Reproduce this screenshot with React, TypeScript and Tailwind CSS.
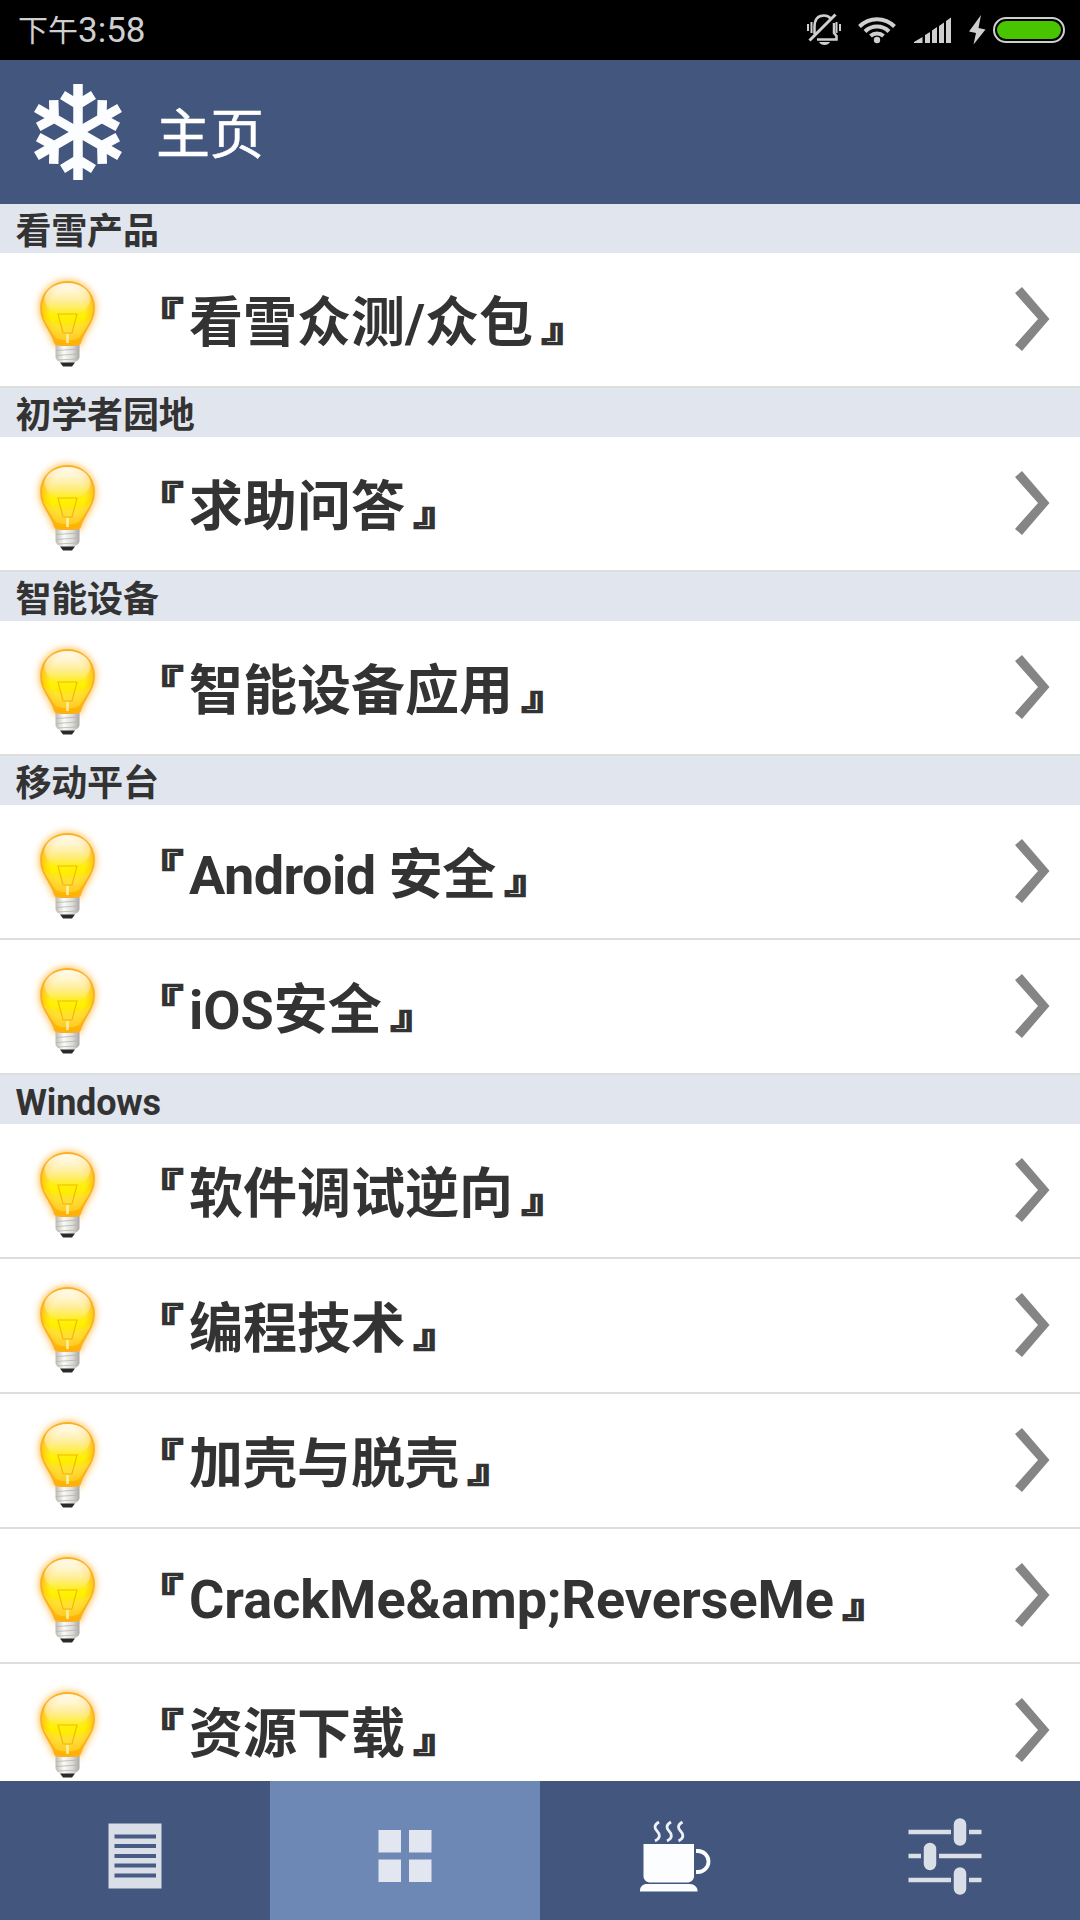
import { useState } from "react";

interface Section {
  title: string;
  items: string[];
}

const sections: Section[] = [
  { title: "看雪产品", items: ["看雪众测/众包"] },
  { title: "初学者园地", items: ["求助问答"] },
  { title: "智能设备", items: ["智能设备应用"] },
  { title: "移动平台", items: ["Android 安全", "iOS安全"] },
  {
    title: "Windows",
    items: ["软件调试逆向", "编程技术", "加壳与脱壳", "CrackMe&amp;ReverseMe", "资源下载"],
  },
];

function StatusIcons() {
  return (
    <svg width="280" height="60" viewBox="800 0 280 60" fill="none">
      {/* Silent bell */}
      <g stroke="#cfcfcf" strokeWidth="2.5">
        <path d="M814.500 34V27C814.500 19.500 818 15.500 824 15.500C827 15.500 829 16.500 831 18.500M834 23V33L836.500 36V39.500H817" />
        <path d="M809.500 40.500L835.500 14.500" strokeWidth="3" />
        <path d="M808 24v7M811.500 22v11M836.500 22v11M840 24v7" strokeWidth="2" />
      </g>
      <path d="M819 42h11c-1 2-3 3-5.500 3s-4.500-1-5.500-3z" fill="#cfcfcf" />
      {/* Wifi */}
      <g stroke="#cfcfcf" strokeWidth="4">
        <path d="M859.500 26.500A24.500 24.500 0 0 1 894.500 26.500" />
        <path d="M865 31.500A17 17 0 0 1 889 31.500" />
        <path d="M870.500 36A9.500 9.500 0 0 1 883.500 36" />
      </g>
      <circle cx="877" cy="40" r="3.200" fill="#cfcfcf" />
      {/* Signal */}
      <path
        d="M914 43V42L922.500 37V43zM925 43V35L930 32V43zM932 43V30.500L937 27V43zM939 43V26L944 22.500V43zM946 43V21L951 17.500V43z"
        fill="#cfcfcf"
      />
      {/* Battery */}
      <path d="M981 15L969 31.500L976 33L973.500 44.500L985.500 29.500L978.500 28z" fill="#cfcfcf" />
      <rect x="994" y="18" width="70" height="24" rx="12" stroke="#cfcfcf" strokeWidth="2" />
      <rect x="997" y="21" width="64" height="18" rx="9" fill="#48c400" />
    </svg>
  );
}

function Snowflake() {
  return (
    <svg width="96" height="96" viewBox="-48 -48 96 96" fill="none" stroke="#fcfdff" strokeWidth="9.500">
      {[0, 60, 120, 180, 240, 300].map((deg) => (
        <path key={deg} d="M0 0V-48M-15.500 -37L0 -27.500L15.500 -37" transform={`rotate(${deg})`} />
      ))}
      <circle r="9" fill="#fcfdff" stroke="none" />
    </svg>
  );
}

function BulbDefs() {
  return (
    <svg width="0" height="0" className="absolute">
      <defs>
        <linearGradient id="glass" x1="0" y1="0" x2="0" y2="1">
          <stop offset="0" stopColor="#ffedb0" />
          <stop offset="0.3" stopColor="#ffe45c" />
          <stop offset="0.56" stopColor="#fff200" />
          <stop offset="0.78" stopColor="#ffdc1c" />
          <stop offset="1" stopColor="#ffae00" />
        </linearGradient>
        <linearGradient id="shine" x1="0" y1="0" x2="0" y2="1">
          <stop offset="0" stopColor="#fff" stopOpacity="0.85" />
          <stop offset="1" stopColor="#fff" stopOpacity="0" />
        </linearGradient>
        <radialGradient id="edge" cx="0.5" cy="0.45" r="0.55">
          <stop offset="0.6" stopColor="#ffb400" stopOpacity="0" />
          <stop offset="1" stopColor="#ffb000" stopOpacity="0.85" />
        </radialGradient>
        <linearGradient id="screw" x1="0" y1="0" x2="1" y2="0">
          <stop offset="0" stopColor="#bdbab2" />
          <stop offset="0.35" stopColor="#fbfbf8" />
          <stop offset="0.7" stopColor="#dddcd8" />
          <stop offset="1" stopColor="#aaa8a3" />
        </linearGradient>
        <filter id="glow" x="-30%" y="-30%" width="160%" height="160%">
          <feGaussianBlur stdDeviation="3.5" />
        </filter>
      </defs>
    </svg>
  );
}

function Bulb() {
  const glass =
    "M67.500 29C82 29 94 40 94 55C94 64 90 70 86 77C83 82 81 86 80 90C79 92 76 92 67.500 92C59 92 56 92 55 90C54 86 52 82 49 77C45 70 41 64 41 55C41 40 53 29 67.500 29Z";
  return (
    <svg width="136" height="133" viewBox="0 0 136 133" fill="none" className="shrink-0">
      <path d={glass} fill="#ffb83a" stroke="#ffb83a" strokeWidth="4" filter="url(#glow)" opacity="0.85" />
      <path d="M55.500 91h24v13c0 3-4 5-7 6h-10c-3-1-7-3-7-6z" fill="url(#screw)" />
      <path d="M56 97.500l23-1.500M56 102.500l23-1.500M57 107l20-1" stroke="#b5b4af" strokeWidth="1" opacity="0.8" />
      <path d="M60 109.500h15l-3 4h-9z" fill="#2a2a2a" />
      <path d={glass} fill="url(#glass)" />
      <path d={glass} fill="url(#edge)" stroke="#fbb01f" strokeWidth="1.800" />
      <path d="M43 64C54 75 81 75 92 64C88 73 82 80 79 85Q67 90 56 85C53 80 47 73 43 64Z" fill="#ffe04a" opacity="0.5" />
      <ellipse cx="67.500" cy="46" rx="23" ry="16" fill="url(#shine)" />
      <path d="M58 61h19l-5 19h-9z" stroke="#efaa00" strokeWidth="1.200" opacity="0.75" />
      <path d="M67.500 81v9" stroke="#fff3a0" strokeWidth="2.500" />
    </svg>
  );
}

function Row({ label }: { label: string }) {
  return (
    <li className="flex h-[135px] items-start border-b-2 border-[#dcdddd] bg-white">
      <Bulb />
      <span className="flex-1 pt-[4px] text-[54px] leading-[133px] font-bold whitespace-nowrap text-[#333]">
        <span className="inline-block origin-[26px_37px] -translate-x-[4px] translate-y-[3px] scale-x-90 scale-y-[0.56] [-webkit-text-stroke:3.5px_#333]">
          『
        </span>
        <span className={label.startsWith("Android") ? "-ml-px tracking-[-0.5px]" : "-ml-px"}>{label}</span>
        <span className="inline-block origin-[28px_90px] translate-x-[6px] -translate-y-[3px] scale-x-90 scale-y-[0.56] [-webkit-text-stroke:3.5px_#333]">
          』
        </span>
      </span>
      <svg width="80" height="133" viewBox="0 0 80 133" className="shrink-0">
        <path d="M15 40L22 34L49.500 66L22 98L15 92L38 66Z" fill="#858585" />
      </svg>
    </li>
  );
}

const tabs = [
  {
    name: "news",
    icon: (
      <g>
        <path d="M108.500 42.500h53v65h-53z" fill="#dadee7" />
        <path d="M114.500 55.500h41.500M114.500 65h41.500M114.500 75h41.500M114.500 84.500h41.500M114.500 94.500h41.500" stroke="#465b86" strokeWidth="4" />
      </g>
    ),
  },
  {
    name: "home",
    icon: <path d="M108.500 49h22.500v22.500h-22.500zM139 49h22.500v22.500h-22.500zM108.500 78.500h22.500v22.500h-22.500zM139 78.500h22.500v22.500h-22.500z" fill="#e1e6f0" />,
  },
  {
    name: "cafe",
    icon: (
      <g>
        <path d="M103.500 63h50.500v32c0 4-3 6.500-7 6.500h-36.500c-4 0-7-2.500-7-6.500z" fill="#fcfdff" />
        <path d="M100 109.500c0-4 3-6.500 7-6.500h43c4 0 7.500 3 7.500 6.500v1h-57.500z" fill="#fcfdff" />
        <path d="M156 70h2a10.500 10.500 0 0 1 0 21h-2" stroke="#fcfdff" strokeWidth="3.800" />
        <path
          d="M119 41c-5 3-5 6-2 9s4 7-2 10M131 41c-5 3-5 6-2 9s4 7-2 10M142.500 41c-5 3-5 6-2 9s4 7-2 10"
          stroke="#eef1f8"
          strokeWidth="2.800"
        />
      </g>
    ),
  },
  {
    name: "settings",
    icon: (
      <g>
        <path d="M98.500 51h42.500M159 51h12.500M98.500 75h12.500M129 75h42.500M98.500 99h42.500M159 99h12.500" stroke="#dadee7" strokeWidth="4.500" />
        <path d="M150 43.500v15M120 68v15M150 92.500v15" stroke="#dadee7" strokeWidth="12.500" strokeLinecap="round" />
      </g>
    ),
  },
];

export default function App() {
  const [active, setActive] = useState("home");

  return (
    <div className="flex h-[1920px] w-[1080px] flex-col overflow-hidden bg-white font-[Roboto,'Noto_Sans_CJK_SC',sans-serif]">
      {/* Status bar */}
      <div className="flex h-[60px] shrink-0 items-center justify-between bg-black pl-[18px] text-[#cfcfcf]">
        <span className="flex items-center pt-[2px] leading-[58px]">
          <span className="text-[30px]">下午</span>
          <span className="text-[35px]">3:58</span>
        </span>
        <StatusIcons />
      </div>

      <header className="flex h-36 shrink-0 items-center bg-[#42567e] pl-[30px]">
        <Snowflake />
        <h1 className="pt-[8px] pl-[30px] text-[54px] leading-none text-white [-webkit-text-stroke:0.5px_white]">主页</h1>
      </header>

      <main className="min-h-0 flex-1 overflow-hidden">
        <BulbDefs />
        {sections.map((section) => (
          <section key={section.title}>
            <h2 className="h-[49px] bg-[#e1e5ed] pt-[4px] pl-[15.5px] text-[36px] leading-[49px] font-bold tracking-[-0.2px] text-[#333]">
              {section.title}
            </h2>
            <ul>
              {section.items.map((item) => (
                <Row key={item} label={item} />
              ))}
            </ul>
          </section>
        ))}
      </main>

      <nav className="grid h-[139px] shrink-0 grid-cols-4">
        {tabs.map((tab) => (
          <button key={tab.name} onClick={() => setActive(tab.name)} className={active === tab.name ? "bg-[#6d88b5]" : "bg-[#42567e]"}>
            <svg width="270" height="139" viewBox="0 0 270 139" fill="none">
              {tab.icon}
            </svg>
          </button>
        ))}
      </nav>
    </div>
  );
}
